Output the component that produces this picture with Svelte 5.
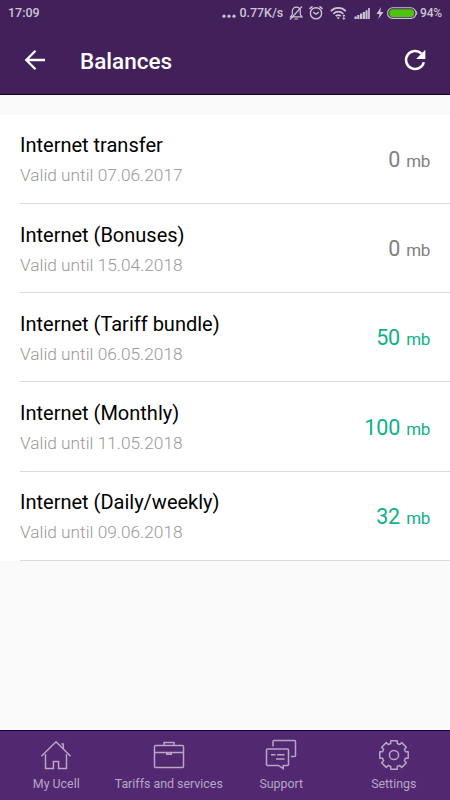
<script lang="ts">
  type Balance = {
    name: string;
    until: string;
    amount: number;
  };

  const balances: Balance[] = [
    { name: "Internet transfer", until: "07.06.2017", amount: 0 },
    { name: "Internet (Bonuses)", until: "15.04.2018", amount: 0 },
    { name: "Internet (Tariff bundle)", until: "06.05.2018", amount: 50 },
    { name: "Internet (Monthly)", until: "11.05.2018", amount: 100 },
    { name: "Internet (Daily/weekly)", until: "09.06.2018", amount: 32 },
  ];

  const tabs = [
    { id: "home", label: "My Ucell" },
    { id: "tariffs", label: "Tariffs and services" },
    { id: "support", label: "Support" },
    { id: "settings", label: "Settings" },
  ];

  // Eight-toothed gear outline around the given centre
  function gearPath(cx: number, cy: number) {
    const points: string[] = [];
    const profile = [
      [-16, 11.9],
      [-13, 14.6],
      [13, 14.6],
      [16, 11.9],
    ];
    for (let i = 0; i < 8; i++) {
      for (const [offset, r] of profile) {
        const a = ((i * 45 + offset) * Math.PI) / 180;
        points.push(`${(cx + r * Math.cos(a)).toFixed(2)} ${(cy + r * Math.sin(a)).toFixed(2)}`);
      }
    }
    return `M${points.join("L")}Z`;
  }
</script>

<div class="screen">
  <div class="status">
    <span class="time">17:09</span>
    <svg class="dots" width="15" height="16" viewBox="0 0 15 16" fill="currentColor">
      <circle cx="2" cy="11.2" r="1.6" />
      <circle cx="7" cy="11.2" r="1.6" />
      <circle cx="12" cy="11.2" r="1.6" />
    </svg>
    <span class="speed">0.77K/s</span>
    <svg class="bell" width="14" height="16" viewBox="0 0 14 16" fill="none" stroke="currentColor" stroke-width="1.2">
      <path d="M1.500 11.800h11.500l-1.700-2.300V6.500C11.300 4 9.700 2.200 7.300 2.200S3.300 4 3.300 6.500v3Z" />
      <path d="M5.500 14H9M13 1.500L1 14.500" />
    </svg>
    <svg class="alarm" width="14" height="16" viewBox="0 0 14 16" fill="none" stroke="currentColor" stroke-width="1.4">
      <circle cx="7" cy="8.3" r="5.6" />
      <path d="M4.300 7.100L7 9.200l2.800-2.100M.5 3.900l3-2.500M13.500 3.900l-3-2.500" />
    </svg>
    <svg class="wifi" width="17" height="16" viewBox="0 0 17 16" fill="none" stroke="currentColor" stroke-width="1.7">
      <path d="M.8 6.200c4.200-4.300 10.800-4.300 15 0M3.300 8.800c2.800-2.900 7.200-2.900 10 0M5.700 11.200c1.600-1.500 3.600-1.500 5 0" />
      <circle cx="8.2" cy="13" r="1.1" fill="currentColor" stroke="none" />
      <path d="M13.800 9.800v4.500M12.500 11.200l1.300-1.300 1.300 1.300M12.500 13l1.300 1.300 1.300-1.300" stroke-width="1" />
    </svg>
    <svg class="signal" width="17" height="16" viewBox="0 0 17 16" fill="currentColor">
      <path d="M.5 11.500h2.300v2.500h-2.300zM3.200 10h2.200v4h-2.200zM6 8.500h2.200v5.500h-2.200zM8.800 7h2.200v7h-2.200zM11.500 5.200h2.100v8.800h-2.100zM14.100 3h1.700v11h-1.700z" />
    </svg>
    <svg class="bolt" width="8" height="16" viewBox="0 0 8 16" fill="currentColor">
      <path d="M5 2L.5 9h3L2.300 14 7.500 7H4.300Z" />
    </svg>
    <svg class="battery" width="31" height="16" viewBox="0 0 31 16">
      <rect x=".6" y="2.8" width="28.3" height="10.6" rx="5" fill="none" stroke="currentColor" stroke-width="1.1" />
      <rect x="2.3" y="4.3" width="24.9" height="7.6" rx="3.5" fill="#4fc40b" />
      <path d="M29.300 6.300q1.200 1.800 0 3.600" fill="none" stroke="currentColor" />
    </svg>
    <span class="percent">94%</span>
  </div>

  <header>
    <svg class="back" width="24" height="24" viewBox="0 0 24 24" fill="none" stroke="#fff" stroke-width="2.3">
      <path d="M22 12H4M12.500 2.800L3.300 12l9.200 9.200" />
    </svg>
    <h1>Balances</h1>
    <svg class="refresh" width="24" height="24" viewBox="0 0 24 24">
      <path d="M20.800 14.200A9 9 0 1 1 18.500 5.700" fill="none" stroke="#fff" stroke-width="2.5" />
      <path d="M22.300 1.800v9.200h-9.200Z" fill="#fff" />
    </svg>
  </header>

  <main>
    <ul>
      {#each balances as item (item.name)}
        <li>
          <div>
            <div class="name">{item.name}</div>
            <div class="until">Valid until {item.until}</div>
          </div>
          <div class="amount" class:active={item.amount > 0}>
            {item.amount} <small>mb</small>
          </div>
        </li>
      {/each}
    </ul>
  </main>

  <nav>
    {#each tabs as tab (tab.id)}
      <div class="tab">
        <svg width="32" height="32" viewBox="0 0 32 32" fill="none" stroke="currentColor" stroke-width="1.5">
          {#if tab.id === "home"}
            <path d="M1.400 17.300L16 2.800l14.600 14.500M21.300 5h2v5" />
            <path d="M5.500 15v14.400h7.900v-7h5.200v7h7.900V15" />
          {:else if tab.id === "tariffs"}
            <rect x="1.5" y="6.5" width="29" height="22" rx="1" />
            <path d="M11 6.500v-3h10v3M1.500 13.400h29M13.700 13.700v1.600h4.600v-1.600" />
          {:else if tab.id === "support"}
            <path d="M2.500 10h20q1 0 1 1v14.500q0 1-1 1h-4.300v3.200l-4.700-3.200h-11q-1 0-1-1V11q0-1 1-1Z" />
            <path d="M8 7.500V2.500q0-1 1-1h20.500q1 0 1 1v14q0 1-1 1h-3.500M6 15.700h4.500M12 15.700h7.500M11 20h8.500" />
          {:else}
            <path d={gearPath(16, 16)} stroke-linejoin="round" />
            <circle cx="16" cy="16" r="4.6" />
          {/if}
        </svg>
        <span>{tab.label}</span>
      </div>
    {/each}
  </nav>
</div>

<style>
  :global(body) {
    margin: 0;
  }

  .screen {
    display: flex;
    flex-direction: column;
    width: 450px;
    height: 800px;
    overflow: hidden;
    background: #fafafa;
    font-family: Roboto, sans-serif;
  }

  svg {
    display: block;
    flex: none;
  }

  .status {
    display: flex;
    align-items: center;
    height: 26px;
    box-sizing: border-box;
    padding: 0 8px 1px;
    background: #42205a;
    color: #cec4d5;
    font-size: 12.5px;
    font-weight: 500;
    white-space: nowrap;
  }

  .time {
    margin-right: auto;
  }

  .dots {
    margin-right: 2px;
  }

  .speed {
    letter-spacing: -0.05px;
  }

  .bell,
  .alarm {
    margin-left: 6px;
  }

  .wifi,
  .signal {
    margin-left: 7px;
  }

  .bolt {
    margin-left: 5px;
  }

  .battery {
    margin-left: 3px;
    margin-right: 2px;
  }

  .percent {
    font-size: 12px;
    letter-spacing: -0.2px;
  }

  header {
    display: flex;
    align-items: center;
    height: 69px;
    box-sizing: border-box;
    padding: 0 23px;
    border-bottom: 1px solid #10031c;
    background: #42205a;
  }

  h1 {
    flex: 1;
    margin: 2px 0 0 33px;
    color: #fff;
    font-size: 22.5px;
    font-weight: 500;
  }

  main {
    flex: 1;
    padding-top: 19.5px;
  }

  ul {
    margin: 0;
    padding: 0 0 0 20px;
    list-style: none;
    background: #fff;
  }

  li {
    display: flex;
    justify-content: space-between;
    align-items: center;
    height: 89.25px;
    box-sizing: border-box;
    padding: 3.5px 20px 0 0;
    border-bottom: 1px solid #dcd9e6;
  }

  .name {
    color: #000;
    font-size: 20px;
    line-height: 30px;
  }

  .until {
    color: #999;
    font-size: 17.3px;
    font-weight: 300;
    line-height: 30px;
  }

  .amount {
    color: #808080;
    font-size: 21.5px;
    line-height: 26px;
    letter-spacing: -0.2px;
    word-spacing: 1.2px;
  }

  .amount.active {
    color: #0eb189;
  }

  small {
    font-size: 17px;
    letter-spacing: -0.4px;
  }

  nav {
    display: flex;
    height: 70px;
    box-sizing: border-box;
    border-top: 1px solid #0c0048;
    background: #522871;
    color: #b9a5c7;
  }

  .tab {
    display: flex;
    flex: 1 1 0;
    flex-direction: column;
    align-items: center;
    padding-top: 8px;
    font-size: 12.4px;
    line-height: 15px;
    white-space: nowrap;
  }

  .tab span {
    margin-top: 5px;
  }
</style>
